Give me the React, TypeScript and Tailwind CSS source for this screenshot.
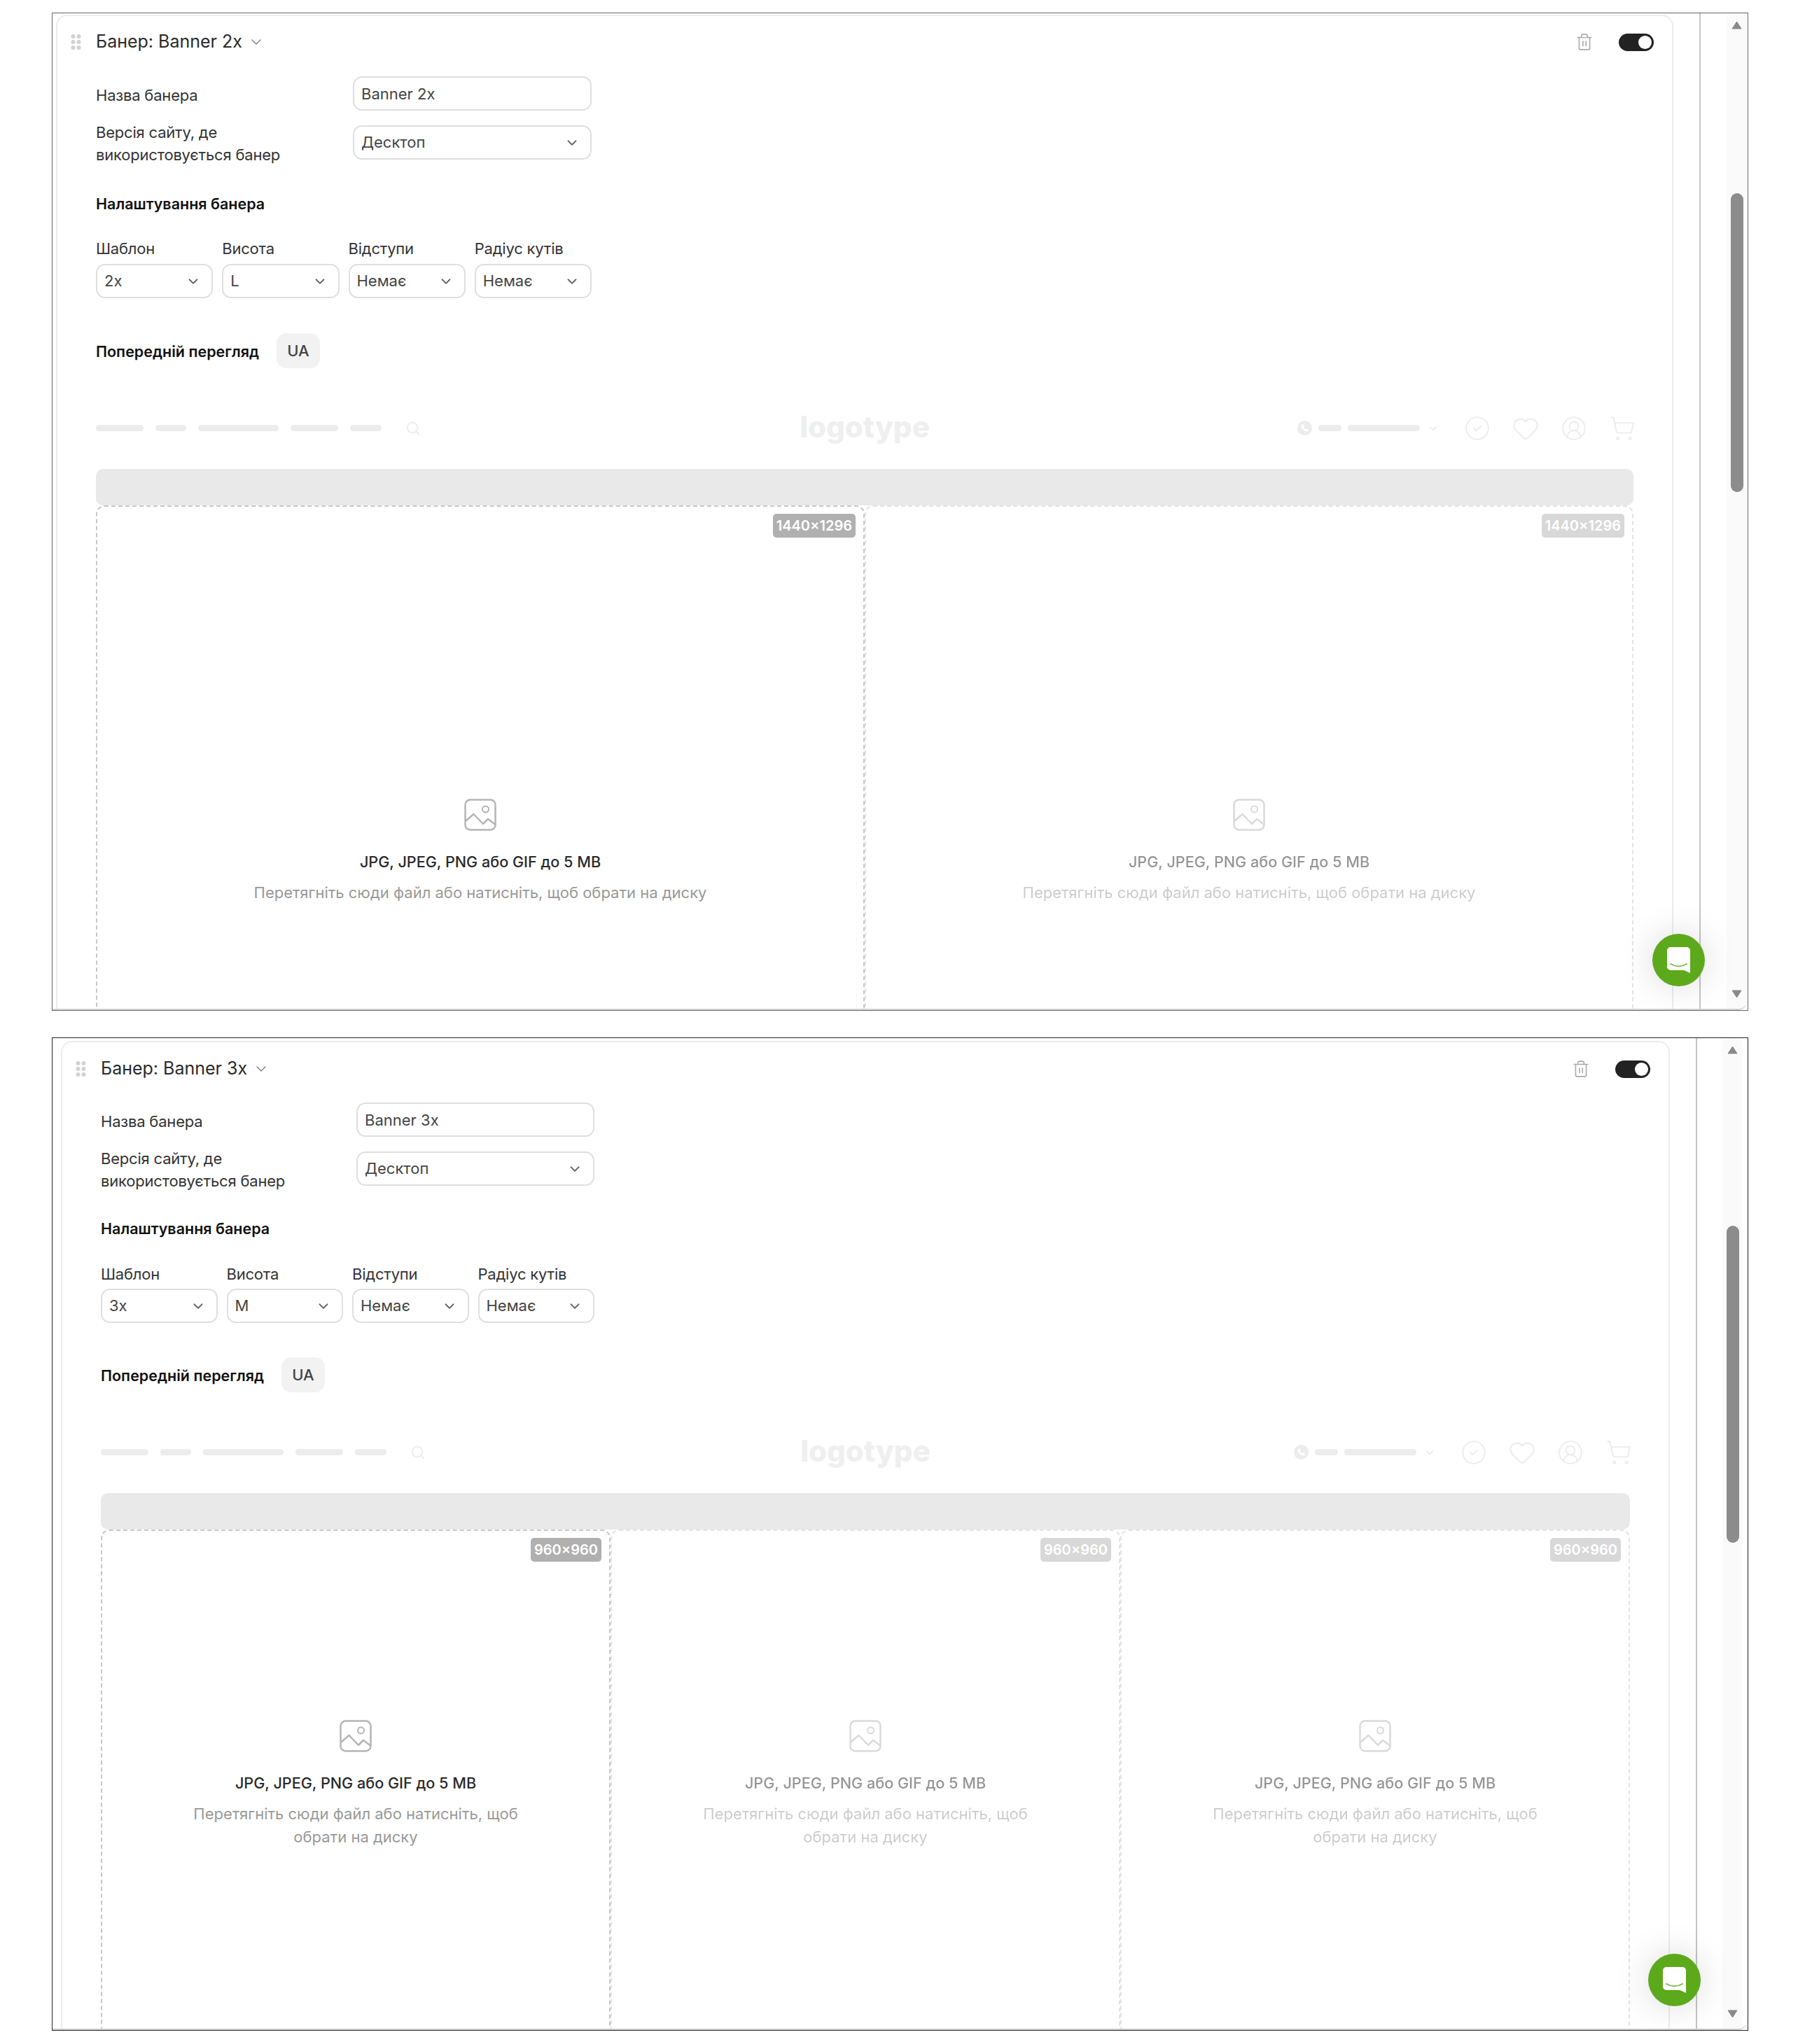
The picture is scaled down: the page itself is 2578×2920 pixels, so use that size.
import { ChevronDown, CircleCheck, CircleUserRound, Heart, Phone, Search, ShoppingCart, Trash2 } from "lucide-react"

const GripDots = () => (
    <svg width="15" height="22" viewBox="0 0 15 22" className="shrink-0">
        {[3, 11, 19].map((y) => (
            <g key={y} fill="#d2d2d2">
                <circle cx="3.5" cy={y} r="3" />
                <circle cx="11.5" cy={y} r="3" />
            </g>
        ))}
    </svg>
)

const PictureIcon = () => (
    <svg width="46" height="46" viewBox="0 0 46 46" fill="none" stroke="#b5b5b5" strokeWidth="2.5" className="shrink-0">
        <rect x="1.5" y="1.5" width="43" height="43" rx="7" />
        <circle cx="30.5" cy="15" r="4.5" strokeWidth="2" />
        <path d="M2 32 L13.5 22 L27 36 L34 29 L44.5 37" strokeLinejoin="round" />
    </svg>
)

const ChatIcon = () => (
    <svg width="33" height="37" viewBox="0 0 33 37">
        <path d="M5 0H28a5 5 0 0 1 5 5V37L24 33H5a5 5 0 0 1-5-5V5a5 5 0 0 1 5-5Z" fill="#ffffff" />
        <path d="M5 24Q16.5 31 28 24" fill="none" stroke="#7dbb48" strokeWidth="2" strokeLinecap="round" />
    </svg>
)

const Arrow = ({ down, className }: { down?: boolean; className?: string }) => (
    <svg width="15" height="12" viewBox="0 0 15 12" className={className}>
        <path d={down ? "M1 1H14L7.5 11Z" : "M7.5 1L14 11H1Z"} fill="#8a8a8a" stroke="#8a8a8a" strokeLinejoin="round" />
    </svg>
)

const SelectBox = ({ value }: { value: string }) => (
    <div className="flex h-[49px] items-center justify-between rounded-[13px] border-2 border-[#dfdfdf] bg-white pr-[15px] pl-[10px] text-[22px] text-[#444]">
        <span>{value}</span>
        <ChevronDown size={22} strokeWidth={2} className="text-[#666]" />
    </div>
)

const Dropzone = ({ size, aspectClass, dim }: { size: string; aspectClass: string; dim?: boolean }) => (
    <div className={`relative flex flex-1 flex-col items-center justify-center rounded-[12px] border-2 border-dashed border-[#c8c8c8] px-[100px] text-center ${aspectClass} ${dim ? "opacity-50" : ""}`}>
        <div className="absolute top-[10px] right-[11px] flex h-[34px] items-center rounded-[5px] bg-[#b0b0b0] px-[5px] text-[20px] font-semibold text-white">
            {size}
        </div>
        <PictureIcon />
        <div className="mt-[29px] text-[21.6px] leading-[30px] font-medium text-[#2a2a2a]">JPG, JPEG, PNG або GIF до 5 MB</div>
        <div className="mt-[13px] text-[22px] leading-[33px] text-[#999]">Перетягніть сюди файл або натисніть, щоб обрати на диску</div>
    </div>
)

const StoreHeader = () => (
    <div className="grid h-[40px] grid-cols-3 items-center">
        <div className="flex items-center gap-[17px]">
            <div className="h-[9px] w-[68px] rounded-full bg-[#ececec]" />
            <div className="h-[9px] w-[44px] rounded-full bg-[#ececec]" />
            <div className="h-[9px] w-[115px] rounded-full bg-[#ececec]" />
            <div className="h-[9px] w-[68px] rounded-full bg-[#ececec]" />
            <div className="h-[9px] w-[45px] rounded-full bg-[#ececec]" />
            <Search size={22} strokeWidth={2} className="ml-[17px] text-[#ececec]" />
        </div>
        <div className="pb-[3px] text-center text-[42px] leading-[38px] font-extrabold text-[#efefef]">logotype</div>
        <div className="-mr-[3px] flex items-center justify-end">
            <div className="flex h-[21px] w-[21px] items-center justify-center rounded-full bg-[#ececec]">
                <Phone size={11} fill="#ffffff" stroke="#ffffff" />
            </div>
            <div className="ml-[9px] h-[9px] w-[33px] rounded-full bg-[#ececec]" />
            <div className="ml-[9px] h-[9px] w-[103px] rounded-full bg-[#ececec]" />
            <ChevronDown size={18} strokeWidth={1.5} className="mx-[10px] text-[#e4e4e4]" />
            <CircleCheck size={38} strokeWidth={1.2} className="ml-[25px] text-[#ececec]" />
            <Heart size={40} strokeWidth={1.2} className="ml-[30px] text-[#ececec]" />
            <CircleUserRound size={38} strokeWidth={1.2} className="ml-[30px] text-[#ececec]" />
            <ShoppingCart size={38} strokeWidth={1.2} className="ml-[31px] text-[#ececec]" />
        </div>
    </div>
)

interface PanelProps {
    name: string
    template: string
    height: string
    sizes: string[]
    aspectClass: string
    frameClass: string
    cardWrapClass: string
    cardClass: string
    headerClass: string
    formClass: string
    labelColClass: string
    fieldColClass: string
    headingClass: string
    labelsClass: string
    selectsClass: string
    previewClass: string
    scrollClass: string
    thumbClass: string
    downClass: string
    chatClass: string
}

const Panel: React.FC<PanelProps> = (p) => (
    <div className={`relative overflow-hidden border bg-white ${p.frameClass}`}>
        <div className="flex h-full overflow-hidden rounded-br-[14px] border-b-2 border-[#d4d4d4]">
            <div className={`shrink-0 ${p.cardWrapClass}`}>
                <div className={`min-h-[2000px] rounded-t-[16px] border-x-2 border-t-2 border-[#ececec] ${p.cardClass}`}>
                    <div className={`flex h-[28px] items-center justify-between pr-[26px] pl-[19px] ${p.headerClass}`}>
                        <div className="flex items-center">
                            <GripDots />
                            <span className="ml-[21px] text-[25px] text-[#2a2a2a]">Банер: {p.name}</span>
                            <ChevronDown size={24} strokeWidth={1.5} className="ml-[8px] text-[#888]" />
                        </div>
                        <div className="flex items-center gap-[36px]">
                            <Trash2 size={26} strokeWidth={1.5} className="text-[#aaa]" />
                            <div className="flex h-[25px] w-[50px] items-center justify-end rounded-full bg-[#222] pr-[3px]">
                                <div className="h-[19px] w-[19px] rounded-full bg-white" />
                            </div>
                        </div>
                    </div>
                    <div className="px-[55px]">
                        <div className={p.formClass}>
                            <div className="flex h-[49px] items-center">
                                <div className={`pt-[5px] text-[22px] tracking-[-0.2px] text-[#333] ${p.labelColClass}`}>Назва банера</div>
                                <input readOnly value={p.name} className={`h-[49px] rounded-[13px] border-2 border-[#dfdfdf] pl-[10px] text-[22px] text-[#444] ${p.fieldColClass}`} />
                            </div>
                            <div className="mt-[21px] flex h-[49px] items-center">
                                <div className={`pt-[2px] text-[22px] leading-[32px] tracking-[-0.2px] text-[#333] ${p.labelColClass}`}>
                                    Версія сайту, де
                                    <br />
                                    використовується банер
                                </div>
                                <div className={p.fieldColClass}>
                                    <SelectBox value="Десктоп" />
                                </div>
                            </div>
                        </div>
                        <div className={`text-[21.5px] leading-[30px] font-semibold text-[#111] ${p.headingClass}`}>Налаштування банера</div>
                        <div className={`grid grid-cols-4 gap-x-[13px] ${p.selectsClass}`}>
                            {[
                                ["Шаблон", p.template],
                                ["Висота", p.height],
                                ["Відступи", "Немає"],
                                ["Радіус кутів", "Немає"],
                            ].map(([label, value]) => (
                                <div key={label}>
                                    <div className={`text-[22px] leading-[30px] tracking-[-0.2px] text-[#333] ${p.labelsClass}`}>{label}</div>
                                    <SelectBox value={value} />
                                </div>
                            ))}
                        </div>
                        <div className={`flex items-center ${p.previewClass}`}>
                            <span className="pt-[2px] text-[21.5px] font-semibold text-[#111]">Попередній перегляд</span>
                            <span className="ml-[25px] flex h-[50px] w-[62px] items-center justify-center rounded-[14px] bg-[#f2f2f2] text-[22px] font-medium text-[#444]">UA</span>
                        </div>
                        <div className="mt-[65px]">
                            <StoreHeader />
                        </div>
                        <div className="mt-[39px] h-[52px] rounded-[10px] bg-[#e9e9e9]" />
                        <div className="flex">
                            {p.sizes.map((size, i) => (
                                <Dropzone key={i} size={size} aspectClass={p.aspectClass} dim={i > 0} />
                            ))}
                        </div>
                    </div>
                </div>
            </div>
            <div className="ml-[37px] h-full w-[2px] shrink-0 bg-[#c4c4c4]" />
            <div className={`flex h-full flex-1 justify-end ${p.scrollClass}`}>
                <div className="flex h-full w-[29px] flex-col items-center bg-[#fafafa]">
                    <Arrow className="mt-[11px]" />
                    <div className={`w-[18px] rounded-full bg-[#8c8c8c] ${p.thumbClass}`} />
                    <Arrow down className={`mt-auto ${p.downClass}`} />
                </div>
            </div>
        </div>
        <div className={`absolute flex h-[75px] w-[75px] items-center justify-center rounded-full bg-[#5da91c] shadow-[0_0_50px_rgba(0,0,0,0.15)] ${p.chatClass}`}>
            <ChatIcon />
        </div>
    </div>
)

const App = () => {
    return (
        <div className="min-h-[2920px] bg-white pt-[18px] pl-[74px] font-[Inter,sans-serif]">
            <Panel
                name="Banner 2x"
                template="2x"
                height="L"
                sizes={["1440×1296", "1440×1296"]}
                aspectClass="aspect-[1440/1296]"
                frameClass="h-[1426px] w-[2423px] border-[#666]"
                cardWrapClass="w-[2315px] pt-[2px] pl-[5px]"
                cardClass="w-[2310px]"
                headerClass="mt-[23px]"
                formClass="mt-[35px]"
                labelColClass="w-[367px]"
                fieldColClass="w-[341px]"
                headingClass="mt-[48px] w-[708px]"
                labelsClass="mb-[7px]"
                selectsClass="mt-[34px] w-[708px]"
                previewClass="mt-[50px]"
                scrollClass="pr-[1px]"
                thumbClass="mt-[234px] h-[427px]"
                downClass="mb-[15px]"
                chatClass="top-[1315px] left-[2285px]"
            />
            <div className="h-[38px]" />
            <Panel
                name="Banner 3x"
                template="3x"
                height="M"
                sizes={["960×960", "960×960", "960×960"]}
                aspectClass="aspect-square"
                frameClass="h-[1419px] w-[2423px] border-[#222]"
                cardWrapClass="w-[2310px] pt-[4px] pl-[12px]"
                cardClass="w-[2298px]"
                headerClass="mt-[24px]"
                formClass="mt-[34px]"
                labelColClass="w-[365px]"
                fieldColClass="w-[340px]"
                headingClass="mt-[46px] w-[705px]"
                labelsClass="mb-[6px]"
                selectsClass="mt-[35px] w-[705px]"
                previewClass="mt-[49px]"
                scrollClass="pr-[7px]"
                thumbClass="mt-[245px] h-[453px]"
                downClass="mb-[15px]"
                chatClass="top-[1308px] left-[2279px]"
            />
        </div>
    )
}

export default App
